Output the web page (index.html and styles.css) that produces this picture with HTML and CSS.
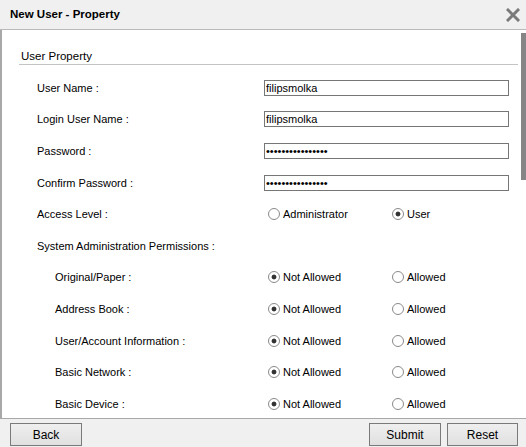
FILE: index.html
```html
<!DOCTYPE html>
<html>
<head>
<meta charset="utf-8">
<title>New User - Property</title>
<link rel="stylesheet" href="styles.css">
</head>
<body>
<div class="dialog">
  <div class="titlebar">
    <span class="title">New User - Property</span>
    <svg class="close" width="14" height="14" viewBox="0 0 14 14"><path d="M2 2 L12 12 M12 2 L2 12" stroke="#7a7a7a" stroke-width="3" stroke-linecap="square"/></svg>
  </div>
  <div class="content">
    <div class="thumb"></div>
    <div class="section-title">User Property</div>
    <div class="rows">
      <div class="row"><span class="label">User Name :</span><input class="field" type="text" value="filipsmolka"></div>
      <div class="row"><span class="label">Login User Name :</span><input class="field" type="text" value="filipsmolka"></div>
      <div class="row"><span class="label">Password :</span><input class="field" type="password" value="filipsmolka12345"></div>
      <div class="row"><span class="label">Confirm Password :</span><input class="field" type="password" value="filipsmolka12345"></div>
      <div class="row"><span class="label">Access Level :</span>
        <div class="options">
          <label class="opt"><input type="radio" name="al"> Administrator</label>
          <label class="opt"><input type="radio" name="al" checked> User</label>
        </div>
      </div>
      <div class="row"><span class="label">System Administration Permissions :</span></div>
      <div class="row sub"><span class="label">Original/Paper :</span>
        <div class="options">
          <label class="opt"><input type="radio" name="p1" checked> Not Allowed</label>
          <label class="opt"><input type="radio" name="p1"> Allowed</label>
        </div>
      </div>
      <div class="row sub"><span class="label">Address Book :</span>
        <div class="options">
          <label class="opt"><input type="radio" name="p2" checked> Not Allowed</label>
          <label class="opt"><input type="radio" name="p2"> Allowed</label>
        </div>
      </div>
      <div class="row sub"><span class="label">User/Account Information :</span>
        <div class="options">
          <label class="opt"><input type="radio" name="p3" checked> Not Allowed</label>
          <label class="opt"><input type="radio" name="p3"> Allowed</label>
        </div>
      </div>
      <div class="row sub"><span class="label">Basic Network :</span>
        <div class="options">
          <label class="opt"><input type="radio" name="p4" checked> Not Allowed</label>
          <label class="opt"><input type="radio" name="p4"> Allowed</label>
        </div>
      </div>
      <div class="row sub"><span class="label">Basic Device :</span>
        <div class="options">
          <label class="opt"><input type="radio" name="p5" checked> Not Allowed</label>
          <label class="opt"><input type="radio" name="p5"> Allowed</label>
        </div>
      </div>
    </div>
  </div>
  <div class="footer">
    <button class="btn back">Back</button>
    <div class="right">
      <button class="btn">Submit</button>
      <button class="btn reset">Reset</button>
    </div>
  </div>
</div>
</body>
</html>
```
FILE: styles.css
```css
html, body {
  margin: 0;
  padding: 0;
  background: #fff;
}
body {
  font-family: "Liberation Sans", Arial, sans-serif;
  font-size: 11px;
  color: #000;
}
.dialog {
  width: 526px;
  height: 447px;
  display: flex;
  flex-direction: column;
  overflow: hidden;
}
.titlebar {
  height: 30px;
  flex: none;
  box-sizing: border-box;
  background: #f0f0f0;
  border-bottom: 1px solid #b9b9b9;
  display: flex;
  align-items: center;
  justify-content: space-between;
  padding: 0 6px 0 10px;
}
.title {
  font-weight: bold;
  font-size: 11.5px;
  padding-bottom: 1px;
}
.close {
  display: block;
  margin-top: 1px;
}
.content {
  flex: 1;
  position: relative;
  overflow: hidden;
  border-left: 2px solid #a8a8a8;
}
.thumb {
  position: absolute;
  right: 0;
  top: 3px;
  width: 5px;
  height: 147px;
  background: #858585;
}
.section-title {
  margin: 18px 8px 0 17px;
  padding-left: 2px;
  font-size: 11.5px;
  line-height: 16px;
  height: 16px;
  border-bottom: 1px solid #c4c4c4;
}
.rows {
  padding-top: 7px;
}
.row {
  height: 31.6px;
  display: flex;
  align-items: center;
  padding-left: 35px;
}
.row.sub {
  padding-left: 53px;
}
.label {
  width: 227px;
  flex: none;
}
.row.sub .label {
  width: 209px;
}
.field {
  width: 245px;
  height: 16px;
  box-sizing: border-box;
  border: 1px solid #767676;
  border-radius: 0;
  padding: 0 1px;
  margin: 0;
  font-family: "Liberation Sans", Arial, sans-serif;
  font-size: 11px;
  color: #000;
  background: #fff;
  outline: none;
}
.options {
  display: flex;
  padding-left: 4px;
}
.opt {
  width: 124px;
  display: flex;
  align-items: center;
  gap: 3px;
  white-space: nowrap;
}
.opt input {
  appearance: none;
  -webkit-appearance: none;
  width: 12px;
  height: 12px;
  margin: 0;
  border: 1px solid #8a8a8a;
  border-radius: 50%;
  background: #fff;
  box-sizing: border-box;
  flex: none;
}
.opt input:checked {
  background: radial-gradient(circle, #333 0, #333 2px, #fff 2.8px);
}
.footer {
  height: 29px;
  flex: none;
  box-sizing: border-box;
  background: #f0f0f0;
  border-top: 1px solid #a8a8a8;
  display: flex;
  justify-content: space-between;
  align-items: flex-start;
  padding: 4px 8px 0 10px;
}
.right {
  display: flex;
  gap: 6px;
}
.btn {
  width: 72px;
  height: 23px;
  box-sizing: border-box;
  margin: 0;
  padding: 0;
  border: 1px solid #7a7a7a;
  border-radius: 0;
  background: linear-gradient(#efefef, #e0e0e0);
  font-family: "Liberation Sans", Arial, sans-serif;
  font-size: 12px;
  color: #000;
}
.btn.reset {
  width: 71px;
}
```
